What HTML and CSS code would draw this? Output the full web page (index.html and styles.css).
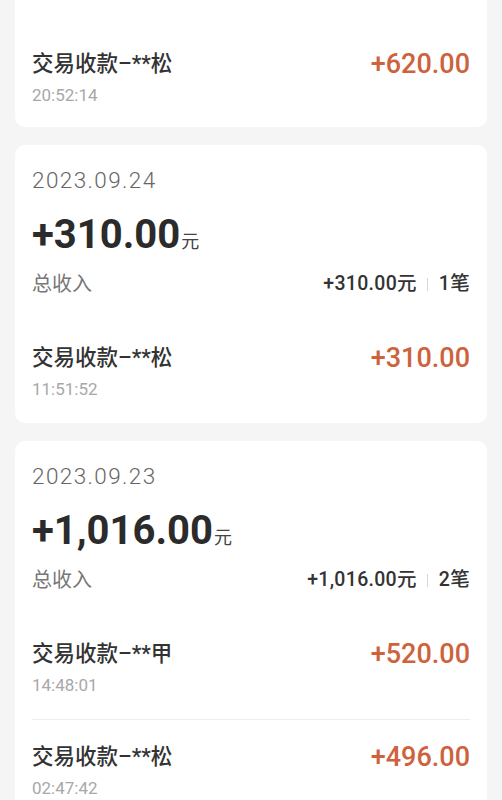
FILE: index.html
```html
<!DOCTYPE html>
<html lang="zh-CN">
<head>
<meta charset="utf-8">
<title>收款记录</title>
<link rel="stylesheet" href="styles.css">
</head>
<body>
<div class="list">
  <section class="card card--cut">
    <div class="item">
      <div class="item-main">
        <div class="item-title">交易收款–**松</div>
        <div class="item-time">20:52:14</div>
      </div>
      <div class="item-amount">+620.00</div>
    </div>
  </section>

  <section class="card">
    <div class="head">
      <div class="date">2023.09.24</div>
      <div class="total"><span class="total-num">+310.00</span><span class="total-unit">元</span></div>
      <div class="summary">
        <span class="summary-label">总收入</span>
        <span class="summary-right">+310.00元<i class="sep"></i>1笔</span>
      </div>
    </div>
    <div class="item">
      <div class="item-main">
        <div class="item-title">交易收款–**松</div>
        <div class="item-time">11:51:52</div>
      </div>
      <div class="item-amount">+310.00</div>
    </div>
  </section>

  <section class="card">
    <div class="head">
      <div class="date">2023.09.23</div>
      <div class="total"><span class="total-num">+1,016.00</span><span class="total-unit">元</span></div>
      <div class="summary">
        <span class="summary-label">总收入</span>
        <span class="summary-right">+1,016.00元<i class="sep"></i>2笔</span>
      </div>
    </div>
    <div class="item">
      <div class="item-main">
        <div class="item-title">交易收款–**甲</div>
        <div class="item-time">14:48:01</div>
      </div>
      <div class="item-amount">+520.00</div>
    </div>
    <div class="item item--divided">
      <div class="item-main">
        <div class="item-title">交易收款–**松</div>
        <div class="item-time">02:47:42</div>
      </div>
      <div class="item-amount">+496.00</div>
    </div>
  </section>
</div>
</body>
</html>
```

FILE: styles.css
```css
* { box-sizing: border-box; }
html, body {
  margin: 0;
  padding: 0;
  background: #f5f5f5;
}
body {
  font-family: "Roboto", "Noto Sans CJK SC", sans-serif;
  color: #333;
  height: 800px;
  overflow: hidden;
}
.list {
  display: flex;
  flex-direction: column;
  gap: 18px;
  padding: 0 15px;
}
.card {
  background: #fff;
  border-radius: 10px;
  padding: 0 17px;
}
.card--cut {
  border-radius: 0 0 10px 10px;
}
.card--cut .item {
  padding-top: 50px;
  padding-bottom: 21px;
}
.head {
  padding: 20px 0 23px;
}
.date {
  font-size: 22.5px;
  line-height: 30px;
  height: 30px;
  color: #666;
  font-weight: 300;
  letter-spacing: 1.4px;
}
.total {
  margin-top: 18px;
  height: 44px;
  line-height: 44px;
  white-space: nowrap;
}
.total-num {
  font-size: 40px;
  font-weight: 700;
  color: #2b2b2b;
}
.total-unit {
  font-size: 18px;
  color: #444;
  margin-left: 1px;
}
.summary {
  margin-top: 13px;
  height: 28px;
  line-height: 28px;
  display: flex;
  justify-content: space-between;
  align-items: center;
}
.summary-label {
  font-size: 20px;
  color: #777;
}
.summary-right {
  font-size: 19.5px;
  color: #333;
  font-weight: 500;
  display: flex;
  align-items: center;
  letter-spacing: 0.3px;
}
.sep {
  display: inline-block;
  width: 1px;
  height: 13px;
  background: #d8d8d8;
  margin: 0 11px 0 10px;
}
.item {
  display: flex;
  justify-content: space-between;
  align-items: flex-start;
  padding: 23px 0;
}
.item--divided {
  border-top: 1px solid #eeeeee;
}
.item-title {
  font-size: 21.5px;
  line-height: 28px;
  height: 28px;
  font-weight: 500;
  color: #333;
}
.item-time {
  margin-top: 6px;
  font-size: 17px;
  line-height: 22px;
  height: 22px;
  color: #a8a8a8;
}
.item-amount {
  font-size: 27px;
  line-height: 28px;
  height: 28px;
  font-weight: 500;
  color: #cd623c;
}
```
